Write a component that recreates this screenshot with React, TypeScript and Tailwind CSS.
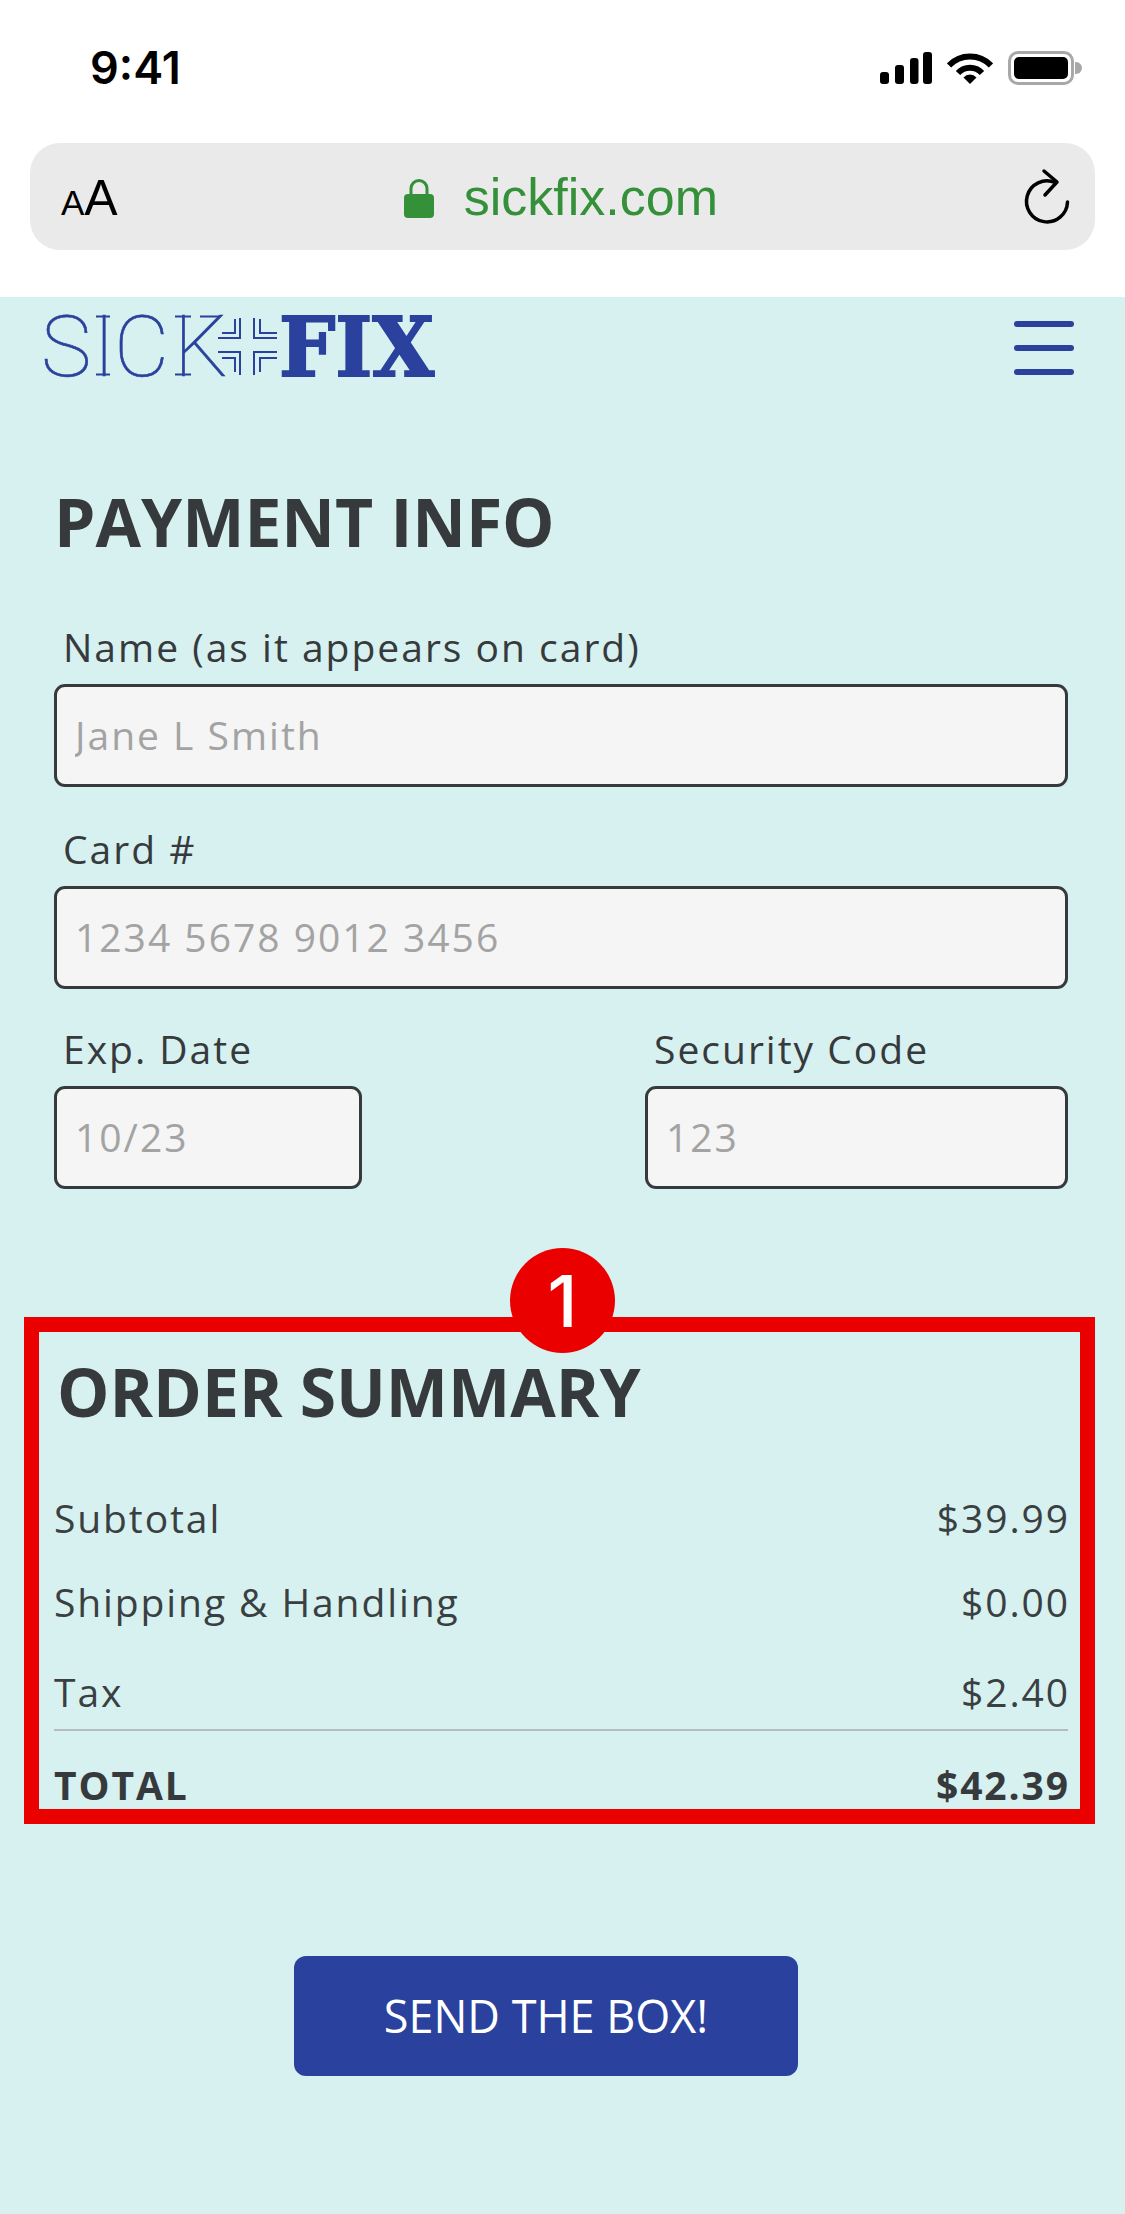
import React from "react";

const Field = ({ label, placeholder, className = "" }: { label: string; placeholder: string; className?: string }) => (
  <div className={className}>
    <label className="block pl-[9px] mb-[13px] text-[39px] leading-[48px] tracking-[2px] text-[#363a3d]">{label}</label>
    <input
      placeholder={placeholder}
      className="block w-full h-[103px] px-[18px] pb-[2px] bg-[#f5f5f5] border-[3px] border-[#363a3d] rounded-[11px] text-[39px] tracking-[2px] placeholder:text-[#a3a3a3] outline-none"
    />
  </div>
);

const Row = ({ label, value, className = "" }: { label: string; value: string; className?: string }) => (
  <div className={`flex justify-between text-[39px] leading-[50px] tracking-[1.9px] text-[#3a3f42] ${className}`}>
    <span>{label}</span>
    <span className="-mr-[2px]">{value}</span>
  </div>
);

function Logo() {
  const c = "#2a419d";
  return (
    <svg width="410" height="100" viewBox="0 0 410 100" className="block">
      <g transform="translate(10 18)">
        <text x="-4 48 69 129" y="61" fontFamily="Roboto" fontWeight="100" fontSize="85" fill={c} stroke={c} strokeWidth="0.6">
          SICK
        </text>
        {/* serifs on the I and K */}
        <path d="M51 1.5H65M51 59.5H65M130 1.5H146M130 59.5H146M155 1.5H175" stroke={c} strokeWidth="2" fill="none" />
        <g stroke={c} strokeWidth="2" fill="none">
          <path d="M173 23H195V3M177 18H190V4" />
          <path d="M232 23H209V3M232 18H215V4" />
          <path d="M173 37H195V60M177 43H190V57" />
          <path d="M232 37H209V60M232 43H215V57" />
        </g>
        <text x="234" y="61" fontFamily="DejaVu Serif" fontWeight="700" fontSize="82" textLength="155" lengthAdjust="spacingAndGlyphs" fill={c} stroke={c} strokeWidth="2">
          FIX
        </text>
      </g>
    </svg>
  );
}

export default function App() {
  return (
    <div className="w-[1125px] h-[2214px] bg-[#d6f1ef] overflow-hidden font-['Open_Sans',sans-serif]">
      {/* Browser chrome */}
      <div className="bg-white h-[297px] pt-[40px]">
        <div className="flex items-center h-[56px] pl-[90px] pr-[43px]">
          <span className="font-['Inter',sans-serif] font-semibold text-[45px] leading-[56px] text-black">9:41</span>
          <div className="ml-auto flex items-center">
            <svg width="52" height="32" viewBox="0 0 52 32" className="block">
              <rect x="0" y="20" width="9" height="12" rx="3" />
              <rect x="15" y="13" width="9" height="19" rx="3" />
              <rect x="30" y="6" width="8.5" height="26" rx="3" />
              <rect x="43" y="0" width="9" height="32" rx="3" />
            </svg>
            <svg width="46" height="32" viewBox="0 0 46 32" className="block ml-[15px]">
              <path d="M2 13.5A29 29 0 0 1 44 13.5" fill="none" stroke="#000" strokeWidth="6" />
              <path d="M11 21A16.5 16.5 0 0 1 35 21" fill="none" stroke="#000" strokeWidth="6" />
              <path d="M23 32L16.5 25.4A9 9 0 0 1 29.5 25.4Z" />
            </svg>
            <div className="ml-[15px] w-[66px] h-[34px] border-[3px] border-[#a8a8a8] rounded-[10px] p-[3px]">
              <div className="w-full h-full bg-black rounded-[5px]" />
            </div>
            <div className="w-[7px] h-[12px] ml-[1px] bg-[#a8a8a8] rounded-r-[6px]" />
          </div>
        </div>
        <div className="mt-[47px] mx-[30px] h-[107px] rounded-[30px] bg-[#eaeaea] flex items-center">
          <div className="ml-[31px] flex items-baseline font-['Liberation_Sans',sans-serif] text-black leading-none pt-[3px]">
            <span className="text-[35px]">A</span>
            <span className="text-[50px]">A</span>
          </div>
          <svg width="30" height="40" viewBox="0 0 30 40" className="block ml-[286px] mt-[3px]">
            <path d="M7 18V10.5a8 8 0 0 1 16 0V18" fill="none" stroke="#34913a" strokeWidth="3" />
            <rect x="0" y="16" width="30" height="24" rx="4" fill="#34913a" />
          </svg>
          <span className="ml-[30px] font-['Liberation_Sans',sans-serif] text-[52px] leading-[60px] text-[#34913a]">sickfix.com</span>
          <svg width="52" height="62" viewBox="0 0 52 62" className="block ml-auto mr-[23px] mt-[2px]" fill="none" stroke="#000" strokeWidth="3.5" strokeLinecap="round" strokeLinejoin="round">
            <path d="M47.5 35A20.5 20.5 0 1 1 35 15.5" />
            <path d="M24 4L37 15L25 28" />
          </svg>
        </div>
      </div>

      {/* Site header */}
      <div className="flex justify-between pl-[35px] pr-[51px]">
        <Logo />
        <div className="w-[60px] pt-[24px] flex flex-col gap-[18px]">
          <div className="h-[6px] rounded-full bg-[#2a419d]" />
          <div className="h-[6px] rounded-full bg-[#2a419d]" />
          <div className="h-[6px] rounded-full bg-[#2a419d]" />
        </div>
      </div>

      {/* Payment form */}
      <div className="pl-[54px] pr-[57px]">
        <h2 className="mt-[84px] text-[66px] leading-[80px] font-bold text-[#363a3d]">PAYMENT INFO</h2>
        <Field className="mt-[62px]" label="Name (as it appears on card)" placeholder="Jane L Smith" />
        <Field className="mt-[38px]" label="Card #" placeholder="1234 5678 9012 3456" />
        <div className="mt-[36px] flex justify-between">
          <Field className="w-[308px]" label="Exp. Date" placeholder="10/23" />
          <Field className="w-[423px]" label="Security Code" placeholder="123" />
        </div>
      </div>

      {/* Order summary */}
      <div className="relative mt-[128px] ml-[24px] w-[1071px] border-[15px] border-[#eb0000] pt-[19px] pl-[15px] pr-[12px]">
        <div className="absolute left-[471px] -top-[84px] w-[105px] h-[105px] rounded-full bg-[#eb0000] flex items-center justify-center font-['Inter',sans-serif] font-medium text-[72px] leading-none text-white">
          1
        </div>
        <h2 className="text-[66px] leading-[80px] font-bold text-[#363a3d] pl-[3px]">ORDER SUMMARY</h2>
        <Row className="mt-[62px]" label="Subtotal" value="$39.99" />
        <Row className="mt-[34px]" label="Shipping & Handling" value="$0.00" />
        <Row className="mt-[40px]" label="Tax" value="$2.40" />
        <div className="mt-[12px] h-[2px] bg-[#b5bdbc]" />
        <div className="mt-[30px] flex justify-between text-[39px] leading-[48px] tracking-[1.9px] font-bold text-[#363a3d]">
          <span>TOTAL</span>
          <span className="-mr-[2px]">$42.39</span>
        </div>
      </div>

      <button className="block mt-[132px] ml-[294px] w-[504px] h-[120px] rounded-[12px] bg-[#2a419d] text-white text-[45px]">
        SEND THE BOX!
      </button>
    </div>
  );
}
